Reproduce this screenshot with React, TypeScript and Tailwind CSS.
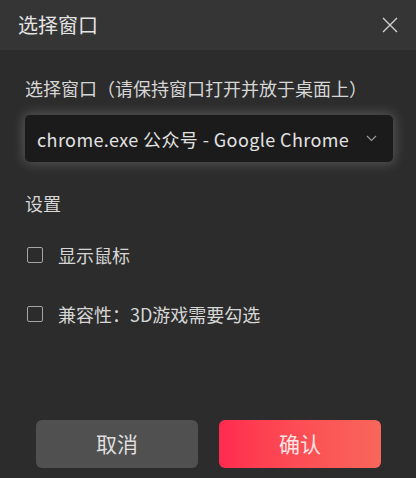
import { useState } from 'react';

const options = [
    { id: 'mouse', label: '显示鼠标' },
    { id: 'compat', label: '兼容性：3D游戏需要勾选' },
];

const CheckRow = ({ label, checked, onToggle }: { label: string; checked: boolean; onToggle: () => void }) => (
    <label className="flex items-center gap-[15px] cursor-pointer" onClick={onToggle}>
        <span className="w-[16px] h-[16px] rounded-[2px] border-[1.5px] border-[#a5a5a5] flex items-center justify-center">
            {checked && <span className="w-[8px] h-[8px] bg-[#a5a5a5]" />}
        </span>
        <span className="text-[18px] text-[#d6d6d6] leading-none">{label}</span>
    </label>
);

const App = () => {
    const [checked, setChecked] = useState<Record<string, boolean>>({});

    return (
        <div
            className="w-[416px] h-[478px] bg-[#2c2c2c] flex flex-col"
            style={{ fontFamily: '"Noto Sans CJK SC", "Noto Sans", sans-serif' }}
        >
            {/* title bar */}
            <div className="h-[50px] bg-[#353535] flex items-center justify-between pl-[18px] pr-[18px] shrink-0">
                <span className="text-[20px] text-[#e4e4e4] leading-none">选择窗口</span>
                <svg width="16" height="16" viewBox="0 0 16 16" className="text-[#d0d0d0]">
                    <path d="M1 1 L15 15 M15 1 L1 15" stroke="currentColor" strokeWidth="1.4" fill="none" />
                </svg>
            </div>

            <div className="flex-1 flex flex-col px-[25px] pt-[29px]">
                <p className="text-[18px] text-[#d6d6d6] leading-none">
                    选择窗口（请保持窗口打开并放于桌面上）
                </p>

                {/* window picker */}
                <div className="mt-[18px] h-[47px] w-[368px] rounded-[5px] bg-[#1b1b1b] shadow-[0_0_12px_2px_rgba(255,255,255,0.2)] flex items-center justify-between pl-[12px] pr-[16px]">
                    <span className="text-[18px] tracking-[0.4px] text-[#e2e2e2] leading-none">chrome.exe 公众号 - Google Chrome</span>
                    <svg width="11" height="7" viewBox="0 0 11 7" className="text-[#9a9a9a]">
                        <path d="M1 1 L5.5 5.5 L10 1" stroke="currentColor" strokeWidth="1.2" fill="none" />
                    </svg>
                </div>

                <p className="mt-[32px] text-[18px] text-[#d6d6d6] leading-none">设置</p>

                <div className="mt-[34px] flex flex-col gap-[41px] pl-[2px]">
                    {options.map(o => (
                        <CheckRow
                            key={o.id}
                            label={o.label}
                            checked={!!checked[o.id]}
                            onToggle={() => setChecked(c => ({ ...c, [o.id]: !c[o.id] }))}
                        />
                    ))}
                </div>

                <div className="mt-auto mb-[10px] flex justify-center gap-[21px] pl-[1px]">
                    <button className="w-[162px] h-[48px] rounded-[6px] bg-[#505050] text-[21px] text-[#dedede]">
                        取消
                    </button>
                    <button className="w-[162px] h-[48px] rounded-[6px] bg-gradient-to-r from-[#ff2a4f] to-[#f8665a] text-[21px] text-[#fde6e6]">
                        确认
                    </button>
                </div>
            </div>
        </div>
    );
};

export default App;
